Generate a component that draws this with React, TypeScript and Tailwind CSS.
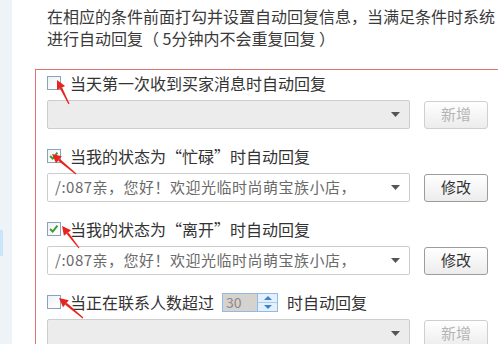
import React from 'react';

const FONT = '"Microsoft YaHei", "Noto Sans CJK SC", "Noto Sans", sans-serif';

interface Rule {
  checked: boolean;
  label: React.ReactNode;
  value: string;
  action: string;
}

const Checkbox: React.FC<{ checked: boolean }> = ({ checked }) => (
  <span className="relative flex w-[14px] h-[14px] shrink-0 border border-[#8aa3bd] bg-gradient-to-br from-[#eef2f6] to-white">
    {checked && (
      <svg viewBox="0 0 14 14" className="absolute left-0 top-0 w-[12px] h-[12px]">
        <path d="M2.5 7 L5.5 10 L11 3" fill="none" stroke="#3a9a2a" strokeWidth="2.2" />
      </svg>
    )}
  </span>
);

const Dropdown: React.FC<{ value: string; disabled: boolean }> = ({ value, disabled }) => (
  <div
    className={`flex items-center w-[363px] h-[29px] border border-[#cdcdcd] rounded-[2px] pl-[7px] pr-[9px] ${
      disabled ? 'bg-[#ececec]' : 'bg-white'
    }`}
  >
    <span className="flex-1 text-[15px] tracking-[0.5px] text-[#6a6a6a] whitespace-nowrap overflow-hidden">{value}</span>
    <svg viewBox="0 0 9 5" className="w-[9px] h-[5px]">
      <path d="M0 0 H9 L4.5 5 Z" fill="#555" />
    </svg>
  </div>
);

const Button: React.FC<{ text: string; disabled: boolean }> = ({ text, disabled }) => (
  <div
    className={`flex items-center justify-center w-[64px] h-[28px] rounded-[3px] border bg-gradient-to-b from-white to-[#ececec] text-[15px] ${
      disabled ? 'border-[#cfcfcf] text-[#b5b5b5]' : 'border-[#9c9c9c] text-[#333]'
    }`}
  >
    {text}
  </div>
);

const Arrow: React.FC<{ x1: number; y1: number; x2: number; y2: number }> = ({ x1, y1, x2, y2 }) => {
  const a = Math.atan2(y1 - y2, x1 - x2);
  const len = 9;
  const w = 4.5;
  const bx = x1 - Math.cos(a) * len;
  const by = y1 - Math.sin(a) * len;
  const px = -Math.sin(a);
  const py = Math.cos(a);
  return (
    <g>
      <path
        d={`M${bx + px * 1.2} ${by + py * 1.2} L${x2 + px * 0.6} ${y2 + py * 0.6} L${x2 - px * 0.6} ${y2 - py * 0.6} L${bx - px * 1.2} ${by - py * 1.2} Z`}
        fill="#e8231f"
      />
      <path d={`M${x1} ${y1} L${bx + px * w} ${by + py * w} L${bx - px * w} ${by - py * w} Z`} fill="#e8231f" />
    </g>
  );
};

const rules: Rule[] = [
  { checked: false, label: '当天第一次收到买家消息时自动回复', value: '', action: '新增' },
  { checked: true, label: '当我的状态为“忙碌”时自动回复', value: '/:087亲，您好！欢迎光临时尚萌宝族小店，', action: '修改' },
  { checked: true, label: '当我的状态为“离开”时自动回复', value: '/:087亲，您好！欢迎光临时尚萌宝族小店，', action: '修改' },
  {
    checked: false,
    label: (
      <>
        <span>当正在联系人数超过</span>
        <span className="flex h-[19px] ml-[8px] mr-[9px] border border-[#8fbbe6]">
          <span className="flex items-center w-[34px] bg-[#d6d2ce] pl-[3px] text-[14px] text-[#8a8a8a]">30</span>
          <span className="flex flex-col w-[20px] border-l border-[#8fbbe6] bg-[#e3f0fb]">
            <span className="flex flex-1 items-center justify-center border-b border-[#a9cdee]">
              <svg viewBox="0 0 8 4" className="w-[8px] h-[4px]"><path d="M0 4 L4 0 L8 4 Z" fill="#3d83c9" /></svg>
            </span>
            <span className="flex flex-1 items-center justify-center">
              <svg viewBox="0 0 8 4" className="w-[8px] h-[4px]"><path d="M0 0 L8 0 L4 4 Z" fill="#3d83c9" /></svg>
            </span>
          </span>
        </span>
        <span>时自动回复</span>
      </>
    ),
    value: '',
    action: '新增',
  },
];

const App: React.FC = () => {
  return (
    <div className="relative flex w-[498px] h-[344px] overflow-hidden bg-white" style={{ fontFamily: FONT }}>
      <div className="flex flex-col w-[12px] shrink-0 bg-[#eef3f7]">
        <div className="h-[230px]" />
        <div className="w-[3px] h-[26px] bg-[#c9e6f8]" />
      </div>

      <div className="flex flex-col">
        <div className="pl-[35px] pt-[5px] text-[16px] leading-[22px] text-[#3a3a3a] whitespace-nowrap">
          <p>在相应的条件前面打勾并设置自动回复信息，当满足条件时系统</p>
          <p>进行自动回复（ 5分钟内不会重复回复 ）</p>
        </div>

        <div className="ml-[23px] mt-[20px] w-[480px] h-[300px] border border-[#e07272] pl-[11px] pt-[1px]">
          {rules.map((r, i) => (
            <div key={i} className="flex flex-col mb-[15px]">
              <div className="flex items-center h-[24px] gap-[9px] text-[16px] text-[#333] whitespace-nowrap">
                <Checkbox checked={r.checked} />
                <span className="flex items-center">{r.label}</span>
              </div>
              <div className="flex items-center gap-[14px] mt-[5px]">
                <Dropdown value={r.value} disabled={!r.checked} />
                <Button text={r.action} disabled={!r.checked} />
              </div>
            </div>
          ))}
        </div>
      </div>

      <svg className="absolute left-0 top-0 w-[498px] h-[344px] pointer-events-none" viewBox="0 0 498 344">
        <Arrow x1={57} y1={80} x2={69} y2={104} />
        <Arrow x1={52} y1={154} x2={76} y2={174} />
        <Arrow x1={62} y1={226} x2={79} y2={248} />
        <Arrow x1={59} y1={298} x2={83} y2={318} />
      </svg>
    </div>
  );
};

export default App;
